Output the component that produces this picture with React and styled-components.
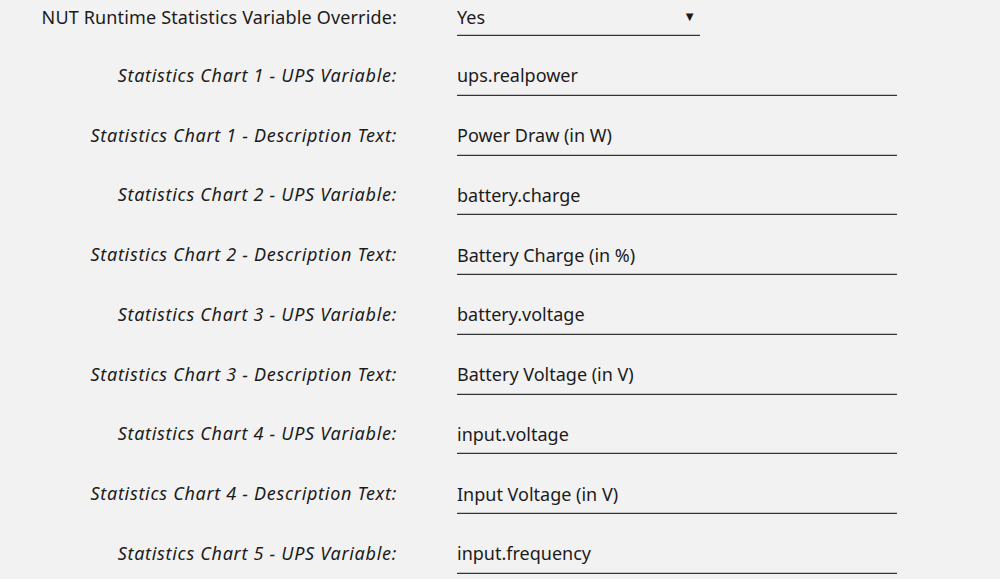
import React from "react";
import styled, { createGlobalStyle } from "styled-components";

const Global = createGlobalStyle`
  html, body {
    margin: 0;
    padding: 0;
    background: #f2f2f2;
  }
  body {
    font-family: "Noto Sans", "Open Sans", sans-serif;
    color: #1c1b1b;
    overflow: hidden;
  }
`;

const Form = styled.div`
  display: grid;
  grid-template-columns: 397px 440px;
  column-gap: 60px;
  row-gap: 19.75px;
  align-items: center;
`;

const Label = styled.label`
  justify-self: end;
  text-align: right;
  font-size: 18px;
  font-style: ${(p) => (p.$italic ? "italic" : "normal")};
  letter-spacing: ${(p) => (p.$italic ? "0.7px" : "0.15px")};
  white-space: nowrap;
  margin-top: -2px;
`;

const underline = `
  border: none;
  border-bottom: 1px solid #333;
  box-shadow: inset 0 -1px 0 #c4c4c4;
  border-radius: 0;
  background: transparent;
  font-family: "Noto Sans", "Open Sans", sans-serif;
  font-size: 18px;
  color: #1c1b1b;
  outline: none;
  padding: 0;
  margin: 0;
  box-sizing: border-box;
`;

const TextInput = styled.input`
  ${underline}
  width: 440px;
  height: 40px;
`;

const SelectWrap = styled.div`
  position: relative;
  width: 243px;

  &::after {
    content: "▼";
    position: absolute;
    right: 4px;
    top: 7px;
    font-size: 13px;
    color: #1c1b1b;
    pointer-events: none;
  }
`;

const Select = styled.select`
  ${underline}
  appearance: none;
  -webkit-appearance: none;
  width: 243px;
  height: 36px;
  padding-bottom: 2px;
`;

const fields = [
  ["Statistics Chart 1 - UPS Variable:", "ups.realpower"],
  ["Statistics Chart 1 - Description Text:", "Power Draw (in W)"],
  ["Statistics Chart 2 - UPS Variable:", "battery.charge"],
  ["Statistics Chart 2 - Description Text:", "Battery Charge (in %)"],
  ["Statistics Chart 3 - UPS Variable:", "battery.voltage"],
  ["Statistics Chart 3 - Description Text:", "Battery Voltage (in V)"],
  ["Statistics Chart 4 - UPS Variable:", "input.voltage"],
  ["Statistics Chart 4 - Description Text:", "Input Voltage (in V)"],
  ["Statistics Chart 5 - UPS Variable:", "input.frequency"],
];

export default function App() {
  return (
    <>
      <Global />
      <Form>
        <Label>NUT Runtime Statistics Variable Override:</Label>
        <SelectWrap>
          <Select defaultValue="yes">
            <option value="yes">Yes</option>
            <option value="no">No</option>
          </Select>
        </SelectWrap>
        {fields.map(([label, value]) => (
          <React.Fragment key={label}>
            <Label $italic>{label}</Label>
            <TextInput type="text" defaultValue={value} />
          </React.Fragment>
        ))}
      </Form>
    </>
  );
}
